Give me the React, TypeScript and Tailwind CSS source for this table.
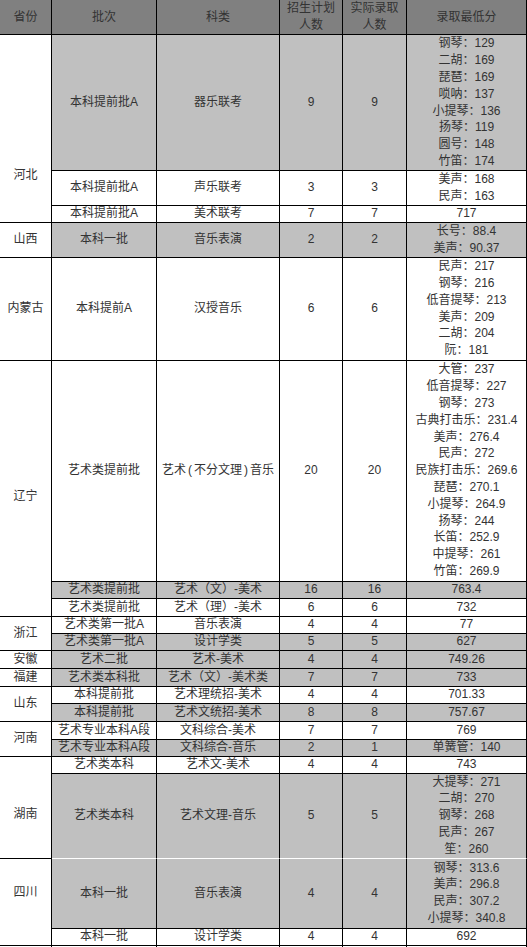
import React from "react";

type CellProps = {
  children?: React.ReactNode;
  g?: boolean;
  rowSpan?: number;
  className?: string;
  wb?: boolean;
};

function C({ children, g, rowSpan, className, wb }: CellProps) {
  return (
    <td
      rowSpan={rowSpan}
      className={
        "border-r border-b p-0 text-center align-middle whitespace-nowrap " +
        (wb ? "border-r-black border-b-white " : "border-black ") +
        (g ? "bg-[#c0c0c0] " : "bg-white ") +
        (className ?? "")
      }
    >
      {children}
    </td>
  );
}

function Lines({ items }: { items: string[] }) {
  return (
    <div className="flex flex-col items-center">
      {items.map((t, i) => (
        <div key={i} className="leading-[16.8px]">
          {t}
        </div>
      ))}
    </div>
  );
}

function Prov({ children, rowSpan, pt }: { children: React.ReactNode; rowSpan?: number; pt?: string }) {
  return (
    <td
      rowSpan={rowSpan}
      className={
        "border-r border-b border-black bg-white p-0 text-center whitespace-nowrap " +
        (pt ? "align-top " + pt : "align-middle")
      }
    >
      {children}
    </td>
  );
}

export default function App() {
  return (
    <div className="w-[527px] overflow-hidden bg-white font-['Liberation_Sans','Noto_Sans_CJK_SC',sans-serif] text-[12px] leading-[15px] text-[#333333]">
      <table className="w-[527px] table-fixed border-separate border-spacing-0">
        <tbody>
          <tr className="h-[35px]">
            <td className="w-[52px] border-r border-b border-black bg-[#808080] p-0 text-center align-middle">省份</td>
            <td className="w-[105px] border-r border-b border-black bg-[#808080] p-0 text-center align-middle">批次</td>
            <td className="w-[123px] border-r border-b border-black bg-[#808080] p-0 text-center align-middle">科类</td>
            <td className="w-[63px] border-r border-b border-black bg-[#808080] p-0 text-center align-middle">
              <div className="leading-[17px]">招生计划</div>
              <div className="leading-[17px]">人数</div>
            </td>
            <td className="w-[64px] border-r border-b border-black bg-[#808080] p-0 text-center align-middle">
              <div className="leading-[17px]">实际录取</div>
              <div className="leading-[17px]">人数</div>
            </td>
            <td className="w-[120px] border-r border-b border-black bg-[#808080] p-0 text-center align-middle">录取最低分</td>
          </tr>

          {/* 河北 */}
          <tr className="h-[136px]">
            <Prov rowSpan={3} pt="pt-[133px]">河北</Prov>
            <C g>本科提前批A</C>
            <C g>器乐联考</C>
            <C g>9</C>
            <C g>9</C>
            <C g>
              <Lines items={["钢琴：129", "二胡：169", "琵琶：169", "唢呐：137", "小提琴：136", "扬琴：119", "圆号：148", "竹笛：174"]} />
            </C>
          </tr>
          <tr className="h-[34px]">
            <C>本科提前批A</C>
            <C>声乐联考</C>
            <C>3</C>
            <C>3</C>
            <C>
              <Lines items={["美声：168", "民声：163"]} />
            </C>
          </tr>
          <tr className="h-[17px]">
            <C>本科提前批A</C>
            <C>美术联考</C>
            <C>7</C>
            <C>7</C>
            <C>717</C>
          </tr>

          {/* 山西 */}
          <tr className="h-[35px]">
            <Prov>山西</Prov>
            <C g>本科一批</C>
            <C g>音乐表演</C>
            <C g>2</C>
            <C g>2</C>
            <C g>
              <Lines items={["长号：88.4", "美声：90.37"]} />
            </C>
          </tr>

          {/* 内蒙古 */}
          <tr className="h-[103px]">
            <Prov>内蒙古</Prov>
            <C>本科提前A</C>
            <C>汉授音乐</C>
            <C>6</C>
            <C>6</C>
            <C>
              <Lines items={["民声：217", "钢琴：216", "低音提琴：213", "美声：209", "二胡：204", "阮：181"]} />
            </C>
          </tr>

          {/* 辽宁 */}
          <tr className="h-[221px]">
            <Prov rowSpan={3} pt="pt-[128px]">辽宁</Prov>
            <C>艺术类提前批</C>
            <C>
              艺术<span className="mx-[2px]">(</span>不分文理<span className="mx-[2px]">)</span>音乐
            </C>
            <C>20</C>
            <C>20</C>
            <C>
              <Lines
                items={[
                  "大管：237",
                  "低音提琴：227",
                  "钢琴：273",
                  "古典打击乐：231.4",
                  "美声：276.4",
                  "民声：272",
                  "民族打击乐：269.6",
                  "琵琶：270.1",
                  "小提琴：264.9",
                  "扬琴：244",
                  "长笛：252.9",
                  "中提琴：261",
                  "竹笛：269.9",
                ]}
              />
            </C>
          </tr>
          <tr className="h-[17px]">
            <C g>艺术类提前批</C>
            <C g>艺术（文）-美术</C>
            <C g>16</C>
            <C g>16</C>
            <C g>763.4</C>
          </tr>
          <tr className="h-[18px]">
            <C>艺术类提前批</C>
            <C>艺术（理）-美术</C>
            <C>6</C>
            <C>6</C>
            <C>732</C>
          </tr>

          {/* 浙江 */}
          <tr className="h-[17px]">
            <Prov rowSpan={2}>浙江</Prov>
            <C>艺术类第一批A</C>
            <C>音乐表演</C>
            <C>4</C>
            <C>4</C>
            <C>77</C>
          </tr>
          <tr className="h-[17px]">
            <C g>艺术类第一批A</C>
            <C g>设计学类</C>
            <C g>5</C>
            <C g>5</C>
            <C g>627</C>
          </tr>

          {/* 安徽 */}
          <tr className="h-[18px]">
            <Prov>安徽</Prov>
            <C g>艺术二批</C>
            <C g>艺术-美术</C>
            <C g>4</C>
            <C g>4</C>
            <C g>749.26</C>
          </tr>

          {/* 福建 */}
          <tr className="h-[18px]">
            <Prov>福建</Prov>
            <C g>艺术类本科批</C>
            <C g>艺术（文）-美术类</C>
            <C g>7</C>
            <C g>7</C>
            <C g>733</C>
          </tr>

          {/* 山东 */}
          <tr className="h-[17px]">
            <Prov rowSpan={2}>山东</Prov>
            <C>本科提前批</C>
            <C>艺术理统招-美术</C>
            <C>4</C>
            <C>4</C>
            <C>701.33</C>
          </tr>
          <tr className="h-[18px]">
            <C g>本科提前批</C>
            <C g>艺术文统招-美术</C>
            <C g>8</C>
            <C g>8</C>
            <C g>757.67</C>
          </tr>

          {/* 河南 */}
          <tr className="h-[18px]">
            <Prov rowSpan={2}>河南</Prov>
            <C>艺术专业本科A段</C>
            <C>文科综合-美术</C>
            <C>7</C>
            <C>7</C>
            <C>769</C>
          </tr>
          <tr className="h-[17px]">
            <C g>艺术专业本科A段</C>
            <C g>文科综合-音乐</C>
            <C g>2</C>
            <C g>1</C>
            <C g>单簧管：140</C>
          </tr>

          {/* 湖南 */}
          <tr className="h-[17px]">
            <Prov rowSpan={2} pt="pt-[50px]">湖南</Prov>
            <C>艺术类本科</C>
            <C>艺术文-美术</C>
            <C>4</C>
            <C>4</C>
            <C>743</C>
          </tr>
          <tr className="h-[85px]">
            <C g wb>艺术类本科</C>
            <C g wb>艺术文理-音乐</C>
            <C g wb>5</C>
            <C g wb>5</C>
            <C g wb>
              <Lines items={["大提琴：271", "二胡：270", "钢琴：268", "民声：267", "笙：260"]} />
            </C>
          </tr>

          {/* 四川 */}
          <tr className="h-[70px]">
            <Prov rowSpan={2} pt="pt-[26px]">四川</Prov>
            <C g>本科一批</C>
            <C g>音乐表演</C>
            <C g>4</C>
            <C g>4</C>
            <C g>
              <Lines items={["钢琴：313.6", "美声：296.8", "民声：307.2", "小提琴：340.8"]} />
            </C>
          </tr>
          <tr className="h-[17px]">
            <C>本科一批</C>
            <C>设计学类</C>
            <C>4</C>
            <C>4</C>
            <C>692</C>
          </tr>
          <tr className="h-[20px]">
            <C> </C>
            <C> </C>
            <C> </C>
            <C> </C>
            <C> </C>
            <C> </C>
          </tr>
        </tbody>
      </table>
    </div>
  );
}
